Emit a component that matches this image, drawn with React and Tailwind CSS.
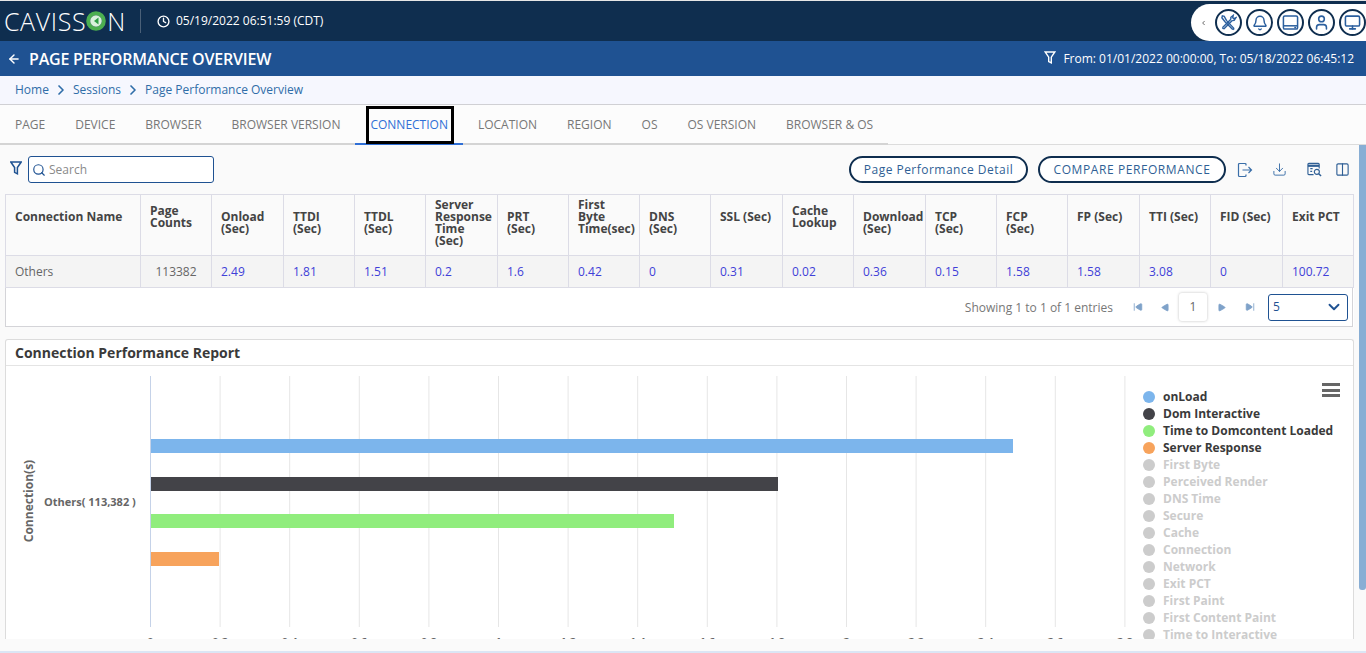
import React from "react";
import { ArrowLeft, ChevronRight, ChevronLeft, ChevronDown, Search, Bell, User, Monitor, Clock, Download, SkipBack, SkipForward, Play, Columns2 } from "lucide-react";

const tabs = ["PAGE", "DEVICE", "BROWSER", "BROWSER VERSION", "CONNECTION", "LOCATION", "REGION", "OS", "OS VERSION", "BROWSER & OS"];

const columns = [
  { label: "Connection Name", value: "Others", width: "w-[135px]", top: "pt-[16px]", plain: true },
  { label: "Page\nCounts", value: "113382", width: "w-[71px]", top: "pt-[10px]", center: true },
  { label: "Onload\n(Sec)", value: "2.49", width: "w-[72px]", top: "pt-[16px]" },
  { label: "TTDI\n(Sec)", value: "1.81", width: "w-[71px]", top: "pt-[16px]" },
  { label: "TTDL\n(Sec)", value: "1.51", width: "w-[71px]", top: "pt-[16px]" },
  { label: "Server\nResponse\nTime\n(Sec)", value: "0.2", width: "w-[72px]", top: "pt-[4px]" },
  { label: "PRT\n(Sec)", value: "1.6", width: "w-[71px]", top: "pt-[16px]" },
  { label: "First\nByte\nTime(sec)", value: "0.42", width: "w-[71px]", top: "pt-[4px]" },
  { label: "DNS\n(Sec)", value: "0", width: "w-[71px]", top: "pt-[16px]" },
  { label: "SSL (Sec)", value: "0.31", width: "w-[72px]", top: "pt-[16px]" },
  { label: "Cache\nLookup", value: "0.02", width: "w-[71px]", top: "pt-[10px]" },
  { label: "Download\n(Sec)", value: "0.36", width: "w-[72px]", top: "pt-[16px]" },
  { label: "TCP\n(Sec)", value: "0.15", width: "w-[71px]", top: "pt-[16px]" },
  { label: "FCP\n(Sec)", value: "1.58", width: "w-[71px]", top: "pt-[16px]" },
  { label: "FP (Sec)", value: "1.58", width: "w-[72px]", top: "pt-[16px]" },
  { label: "TTI (Sec)", value: "3.08", width: "w-[71px]", top: "pt-[16px]" },
  { label: "FID (Sec)", value: "0", width: "w-[72px]", top: "pt-[16px]" },
  { label: "Exit PCT", value: "100.72", width: "w-[71px]", top: "pt-[16px]" },
];

const legend = [
  ["onLoad", "bg-[#7cb5ec]", "text-[#3a3a3a]"],
  ["Dom Interactive", "bg-[#434348]", "text-[#3a3a3a]"],
  ["Time to Domcontent Loaded", "bg-[#90ed7d]", "text-[#3a3a3a]"],
  ["Server Response", "bg-[#f7a35c]", "text-[#3a3a3a]"],
  ["First Byte", "bg-[#cccccc]", "text-[#cccccc]"],
  ["Perceived Render", "bg-[#cccccc]", "text-[#cccccc]"],
  ["DNS Time", "bg-[#cccccc]", "text-[#cccccc]"],
  ["Secure", "bg-[#cccccc]", "text-[#cccccc]"],
  ["Cache", "bg-[#cccccc]", "text-[#cccccc]"],
  ["Connection", "bg-[#cccccc]", "text-[#cccccc]"],
  ["Network", "bg-[#cccccc]", "text-[#cccccc]"],
  ["Exit PCT", "bg-[#cccccc]", "text-[#cccccc]"],
  ["First Paint", "bg-[#cccccc]", "text-[#cccccc]"],
  ["First Content Paint", "bg-[#cccccc]", "text-[#cccccc]"],
  ["Time to Interactive", "bg-[#cccccc]", "text-[#cccccc]"],
];

const ticks = ["0", "0.2", "0.4", "0.6", "0.8", "1", "1.2", "1.4", "1.6", "1.8", "2", "2.2", "2.4", "2.6", "2.8"];

const Tools = () => (
  <svg viewBox="0 0 18 18" className="w-[17px] h-[17px]" fill="none" stroke="#2b5f9e" strokeWidth="1.5">
    <path d="M2.5 14.5 L11.5 5.5 M4 16 L13 7 M2.5 14.5 L4 16 M11.5 5.5 L11.5 3.5 L14 1.5 L13.5 4 L14.5 5 L16.8 4 L15 6.8 L13 7" />
    <path d="M15 15.5 L7 7 M13.5 16.5 L5.5 8.5 M15 15.5 L13.5 16.5 M7 7 L4.5 2.5 L2.5 2 L2 4 L5.5 8.5" />
  </svg>
);

const Tablet = () => (
  <svg viewBox="0 0 18 18" className="w-[17px] h-[17px]" fill="none" stroke="#2b5f9e" strokeWidth="1.6">
    <rect x="1.5" y="2" width="15" height="14" rx="1.5" />
    <path d="M1.5 12.5 H16.5" />
    <path d="M13 14.3 H15" />
  </svg>
);

const CircleIcon = ({ children }) => (
  <div className="w-[27px] h-[27px] rounded-full border-2 border-[#0f2e4f] bg-white flex items-center justify-center shrink-0">
    {children}
  </div>
);

const Funnel = ({ color, size }) => (
  <svg viewBox="0 0 12 14" className={size} fill="none" stroke={color} strokeWidth="1.5">
    <path d="M0.8 1 H11.2 L7.4 6.6 V12.8 L4.6 11.4 V6.6 Z" />
  </svg>
);

const App = () => {
  return (
    <div className="w-[1366px] h-[653px] overflow-hidden flex flex-col bg-[#fafafa] font-['Open_Sans',sans-serif]">
      <div className="h-[1px] bg-[#e6e6e6] shrink-0" />

      <div className="h-[40px] shrink-0 bg-[#0f2e4f] flex items-center text-white">
        <div className="w-[140px] pl-[4px] flex items-center text-[25px] font-light leading-none tracking-[0.6px]">
          <span>CAVISS</span>
          <svg viewBox="0 0 20 20" className="w-[20px] h-[20px]">
            <circle cx="10" cy="10" r="7.8" fill="none" stroke="#4caf50" strokeWidth="4" />
            <circle cx="10" cy="10" r="5.8" fill="#d9f2dc" />
            <path d="M12.5 6.5 L8 10 L12.5 13.5 Z" fill="#2e9e46" />
          </svg>
          <span className="ml-[1px]">N</span>
        </div>
        <div className="w-[1px] h-[24px] bg-[#4a6078]" />
        <Clock className="ml-[16px] w-[13px] h-[13px]" strokeWidth={2.5} />
        <span className="ml-[6px] text-[12px] font-medium">05/19/2022 06:51:59 (CDT)</span>
        <div className="ml-auto h-[37px] mt-[3px] w-[175px] bg-white rounded-l-[19px] flex items-center gap-[4px] pl-[9px]">
          <ChevronLeft className="w-[12px] h-[12px] text-[#333333] mr-[4px]" strokeWidth={2.5} />
          <CircleIcon><Tools /></CircleIcon>
          <CircleIcon><Bell className="w-[16px] h-[16px] text-[#2b5f9e]" strokeWidth={2.2} /></CircleIcon>
          <CircleIcon><Tablet /></CircleIcon>
          <CircleIcon><User className="w-[17px] h-[17px] text-[#2b5f9e]" strokeWidth={2.2} /></CircleIcon>
          <CircleIcon><Monitor className="w-[17px] h-[17px] text-[#2b5f9e]" strokeWidth={2.2} /></CircleIcon>
        </div>
      </div>

      <div className="h-[35px] shrink-0 bg-[#1f5292] flex items-center text-white pl-[7px] pr-[12px]">
        <ArrowLeft className="w-[14px] h-[14px]" strokeWidth={2.5} />
        <span className="ml-[8px] text-[16px] font-semibold tracking-[-0.2px]">PAGE PERFORMANCE OVERVIEW</span>
        <Funnel color="#ffffff" size="ml-auto w-[12px] h-[13px] mb-[3px]" />
        <span className="ml-[7px] text-[12px] font-medium">From: 01/01/2022 00:00:00, To: 05/18/2022 06:45:12</span>
      </div>

      <div className="h-[29px] shrink-0 bg-[#f6f7fe] border-b border-[#d0d0d4] flex items-center pl-[15px] text-[12px] text-[#2f6da8]">
        <span>Home</span>
        <ChevronRight className="w-[16px] h-[16px] mx-[4px]" strokeWidth={2.5} />
        <span>Sessions</span>
        <ChevronRight className="w-[16px] h-[16px] mx-[4px]" strokeWidth={2.5} />
        <span>Page Performance Overview</span>
      </div>

      <div className="h-[40px] shrink-0 bg-[#fcfcfc] border-b border-[#dcdcdc] flex">
        {tabs.map((t) =>
          t === "CONNECTION" ? (
            <div key={t} className="relative px-[15px] pt-[2px] flex items-center text-[12px] text-[#2f6fd6] border-b-2 border-[#2f6fd6] h-[40px]">
              {t}
              <div className="absolute left-[11px] right-[9px] top-[1px] h-[38px] border-[3px] border-black" />
            </div>
          ) : (
            <div key={t} className="px-[15px] pt-[2px] flex items-center text-[12px] text-[#777777] border-b-2 border-[#d4d4d4] h-[40px]">
              {t}
            </div>
          )
        )}
      </div>

      <div className="flex-1 flex min-h-0">
        <div className="flex-1 min-w-0 overflow-hidden flex flex-col">
          <div className="h-[49px] shrink-0 flex items-center pl-[10px] pr-[9px]">
            <Funnel color="#1f5292" size="w-[12px] h-[14px] mb-[3px]" />
            <div className="ml-[6px] w-[186px] h-[27px] border border-[#1f5292] rounded-[3px] flex items-center pl-[3px] bg-white">
              <Search className="w-[14px] h-[14px] text-[#1f5292]" />
              <span className="ml-[3px] text-[12px] text-[#8a8a8a]">Search</span>
            </div>
            <button className="ml-auto w-[179px] h-[27px] rounded-full border-2 border-[#0f2e4f] bg-white text-[12px] text-[#2f5f95] tracking-[0.47px]">
              Page Performance Detail
            </button>
            <button className="ml-[10px] w-[188px] h-[27px] rounded-full border-2 border-[#0f2e4f] bg-white text-[12px] text-[#2f5f95] tracking-[0.6px]">
              COMPARE PERFORMANCE
            </button>
            <svg viewBox="0 0 16 16" className="ml-[11px] w-[16px] h-[16px]" fill="none" stroke="#3a6ea8" strokeWidth="1.2">
              <path d="M9 3.5 V2.5 Q9 1.5 8 1.5 H2.5 Q1.5 1.5 1.5 2.5 V13.5 Q1.5 14.5 2.5 14.5 H8 Q9 14.5 9 13.5 V12.5" />
              <path d="M5.5 8 H14.5 M11.5 5 L14.5 8 L11.5 11" />
            </svg>
            <Download className="ml-[19px] w-[15px] h-[15px] text-[#3a6ea8]" strokeWidth={1.5} />
            <svg viewBox="0 0 16 16" className="ml-[20px] w-[15px] h-[15px]" fill="none" stroke="#2f5f95" strokeWidth="1.2">
              <path d="M7 13.5 H2 Q1 13.5 1 12.5 V2.5 Q1 1.5 2 1.5 H12 Q13 1.5 13 2.5 V7" />
              <path d="M1 4 H13" strokeWidth="2.4" />
              <path d="M3.5 7 H6 M3.5 10 H5.5" />
              <circle cx="10.5" cy="10.5" r="2.7" />
              <path d="M12.5 12.5 L15 15" strokeWidth="1.6" />
            </svg>
            <Columns2 className="ml-[13px] w-[15px] h-[15px] text-[#2f5f95]" strokeWidth={1.8} />
          </div>

          <div className="mx-[5px] shrink-0 bg-white">
            <table className="table-fixed border-collapse w-[1348px] text-[12px]">
              <thead>
                <tr className="h-[61px] bg-[#fafafa]">
                  {columns.map((c) => (
                    <th key={c.label} className={`${c.width} ${c.top} align-top text-left font-bold whitespace-pre-line text-[#444444] leading-[12px] pl-[9px] pr-0 border border-[#dcdce6]`}>
                      {c.label}
                    </th>
                  ))}
                </tr>
              </thead>
              <tbody>
                <tr className="h-[32px] bg-[#f4f4f4]">
                  {columns.map((c) => (
                    <td key={c.label} className={`${c.center ? "text-center" : "pl-[9px]"} ${c.plain || c.center ? "text-[#666666]" : "text-[#4040d8]"} border border-[#dcdce6]`}>
                      {c.value}
                    </td>
                  ))}
                </tr>
              </tbody>
            </table>
            <div className="h-[39px] w-[1348px] flex items-center justify-end pr-[4px] border-x border-b border-[#d4d4d8]">
              <span className="text-[12px] text-[#777777] mt-[2px]">Showing 1 to 1 of 1 entries</span>
              <SkipBack className="ml-[20px] w-[10px] h-[10px] text-[#7fa2c9] fill-[#7fa2c9]" />
              <Play className="ml-[18px] w-[9px] h-[9px] rotate-180 text-[#7fa2c9] fill-[#7fa2c9]" />
              <div className="ml-[9px] w-[28px] h-[28px] bg-white rounded-[3px] shadow-[0_0_3px_rgba(0,0,0,0.25)] flex items-center justify-center text-[12px] text-[#666666]">1</div>
              <Play className="ml-[10px] w-[9px] h-[9px] text-[#7fa2c9] fill-[#7fa2c9]" />
              <SkipForward className="ml-[19px] w-[10px] h-[10px] text-[#7fa2c9] fill-[#7fa2c9]" />
              <div className="ml-[13px] w-[80px] h-[27px] border border-[#1f5292] rounded-[3px] flex items-center justify-between px-[4px] text-[12px] text-[#1f5292]">
                5
                <ChevronDown className="w-[18px] h-[18px]" strokeWidth={2.5} />
              </div>
            </div>
          </div>

          <div className="relative mx-[5px] mt-[12px] flex-1 min-h-0 overflow-hidden bg-white border border-[#dcdcdc] rounded-t-[3px] border-b-0">
            <div className="h-[26px] flex items-center pl-[9px] border-b border-[#e4e4e4] text-[14px] font-bold text-[#3a3a3a]">
              Connection Performance Report
            </div>
            <div className="flex">
              <svg width="1132" height="273" className="shrink-0 font-['Open_Sans',sans-serif]">
                {ticks.map((t, i) => (
                  <g key={t}>
                    <line x1={144.5 + i * 69.6} x2={144.5 + i * 69.6} y1="10" y2="261" stroke={i === 0 ? "#c5d2e8" : "#e6e6e6"} />
                    <text x={144.5 + i * 69.6} y="280" textAnchor="middle" fontSize="11" fontWeight="700" fill="#666666">{t}</text>
                  </g>
                ))}
                <rect x="145" y="73" width="862" height="14" fill="#7cb5ec" />
                <rect x="145" y="111" width="627" height="14" fill="#434348" />
                <rect x="145" y="148" width="523" height="14" fill="#90ed7d" />
                <rect x="145" y="186" width="68" height="14" fill="#f7a35c" />
                <text x="38" y="140" fontSize="11" fontWeight="700" fill="#666666">Others( 113,382 )</text>
                <text transform="translate(27 135) rotate(-90)" textAnchor="middle" fontSize="12" fontWeight="700" fill="#666666">Connection(s)</text>
              </svg>
              <div className="pt-[22px] pl-[5px] flex flex-col">
                {legend.map(([name, dot, text]) => (
                  <div key={name} className="h-[17px] flex items-center whitespace-nowrap text-[12px] font-bold">
                    <span className={`w-[12px] h-[12px] rounded-full shrink-0 ${dot}`} />
                    <span className={`ml-[8px] ${text}`}>{name}</span>
                  </div>
                ))}
              </div>
            </div>
            <div className="absolute right-[13px] top-[43px] flex flex-col gap-[2.5px]">
              <div className="w-[18px] h-[3px] bg-[#666666]" />
              <div className="w-[18px] h-[3px] bg-[#666666]" />
              <div className="w-[18px] h-[3px] bg-[#666666]" />
            </div>
          </div>
        </div>
        <div className="w-[7px] shrink-0">
          <div className="h-[445px] bg-[#88aed4] rounded-b-[3px]" />
        </div>
      </div>

      <div className="h-[12px] shrink-0 bg-[#fafafa]" />
      <div className="h-[2px] shrink-0 bg-[#dbe6f5]" />
    </div>
  );
};

export default App;
